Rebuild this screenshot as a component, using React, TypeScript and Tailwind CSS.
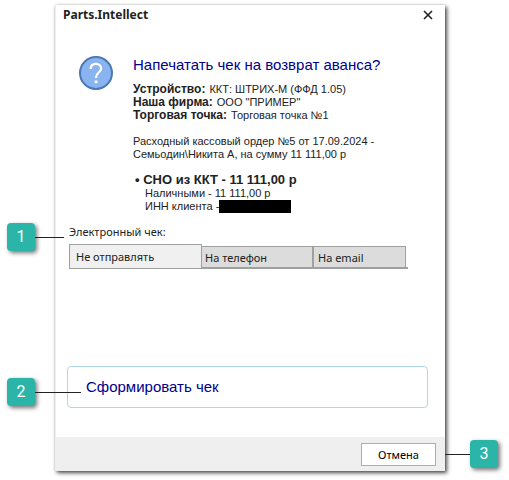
import type { ReactNode } from "react";

function Marker({ n, side = "left", line }: { n: number; side?: "left" | "right"; line: string }) {
  const badge = (
    <span className="flex size-7 shrink-0 items-center justify-center rounded-[4px] bg-[#2bb5a8] font-['Roboto',sans-serif] text-base text-white shadow-[2px_2px_4px_rgba(0,0,0,0.55)]">
      {n}
    </span>
  );
  const rule = <span className={`h-px bg-[#222222] ${line}`} />;
  return (
    <div className={`absolute top-1/2 flex -translate-y-1/2 items-center ${side === "left" ? "-left-[49px]" : "left-full"}`}>
      {side === "left" ? badge : rule}
      {side === "left" ? rule : badge}
    </div>
  );
}

function Field({ label, children }: { label: string; children: ReactNode }) {
  return (
    <p className="flex h-[13px] items-baseline gap-1">
      <b className="text-xs leading-[13px]">{label}</b>
      <span>{children}</span>
    </p>
  );
}

export default function App() {
  return (
    <main className="bg-white pt-[5px] pr-16 pb-2 pl-[55px] font-['Liberation_Sans',Arial,sans-serif] text-[11px] leading-[13px] text-[#222222]">
      <section
        role="dialog"
        aria-labelledby="title"
        className="relative border-l border-[#eeeeee] bg-white shadow-[2px_2px_4px_rgba(0,0,0,0.7),0_0_2px_rgba(0,0,0,0.2)]"
      >
        <header className="flex h-5 items-center justify-between pr-3 pl-[7px]">
          <h1 id="title" className="font-['Noto_Sans',sans-serif] text-xs font-bold">
            Parts.Intellect
          </h1>
          <button type="button" aria-label="Закрыть" className="flex size-[10px] items-center justify-center">
            <svg viewBox="0 0 10 10" className="size-[10px]" fill="none" stroke="#222222" strokeWidth="1.6">
              <path d="M1 1l8 8M9 1l-8 8" />
            </svg>
          </button>
        </header>

        <div className="flex gap-5 pt-[30px] pl-[23px]">
          <svg viewBox="0 0 34 34" className="mt-px size-[34px] shrink-0" fill="none">
            <circle cx="17" cy="17" r="16" fill="#8ab4f0" stroke="#4a78b5" strokeWidth="2" />
            <path
              d="M11.7 13c0-3.2 2.1-5.2 5.2-5.2s5.2 1.9 5.2 4.6c0 3.9-5 4.3-5 8.6v1"
              stroke="#fff"
              strokeWidth="2.2"
            />
            <circle cx="17.1" cy="25.8" r="1.6" fill="#fff" />
          </svg>
          <div>
            <h2 className="text-[15px] leading-5 text-[#00008b]">Напечатать чек на возврат аванса?</h2>
            <div className="mt-2">
              <Field label="Устройство:">ККТ: ШТРИХ-М (ФФД 1.05)</Field>
              <Field label="Наша фирма:">ООО "ПРИМЕР"</Field>
              <Field label="Торговая точка:">Торговая точка №1</Field>
            </div>
            <p className="mt-[13px]">
              Расходный кассовый ордер №5 от 17.09.2024 -
              <br />
              Семьодин\Никита А, на сумму 11 111,00 р
            </p>
            <div className="mt-3 pl-3">
              <p className="-indent-[10px] text-[13px] leading-[14px] font-bold">• СНО из ККТ - 11 111,00 р</p>
              <p>Наличными - 11 111,00 р</p>
              <p className="flex">
                ИНН клиента -<span className="h-[13px] w-[72px] bg-black" />
              </p>
            </div>
          </div>
        </div>

        <div className="pr-[17px] pl-[13px] font-['Noto_Sans',sans-serif]">
          <div className="relative mt-[11px]">
            <p className="flex h-5 items-center pb-1.5">Электронный чек:</p>
            <div className="absolute top-[13px] -left-[13px]">
              <Marker n={1} line="w-[29px]" />
            </div>
          </div>
          <div role="tablist" className="flex w-[339px] items-end">
            <button type="button" role="tab" aria-selected="true" className="h-[25px] w-[133px] border border-[#a0a0a0] bg-[#f0f0f0] pl-1.5 text-left">
              Не отправлять
            </button>
            <div className="flex h-[23px] flex-1 border-b-2 border-[#a0a0a0] pr-0.5">
              <button type="button" role="tab" aria-selected="false" className="w-[112px] border-t border-r-2 border-[#a0a0a0] bg-[#dcdcdc] pl-[3px] text-left">
                На телефон
              </button>
              <button type="button" role="tab" aria-selected="false" className="flex-1 border-t border-r border-[#a0a0a0] bg-[#dcdcdc] pl-1 text-left">
                На email
              </button>
            </div>
          </div>
        </div>

        <div className="relative mt-[97px] pr-[17px] pb-[29px] pl-[11px]">
          <button
            type="button"
            className="block h-[42px] w-full rounded-[4px] border border-[#add8e6] pl-[18px] text-left text-[15px] leading-5 text-[#00008b]"
          >
            Сформировать чек
          </button>
          <div className="absolute top-[26px] left-0">
            <Marker n={2} line="w-[46px]" />
          </div>
        </div>

        <footer className="relative flex h-[34px] items-center justify-end bg-[#efefef] pr-[9px]">
          <button type="button" className="h-[23px] w-[75px] border border-[#adadad] bg-white font-['Noto_Sans',sans-serif] text-black">
            Отмена
          </button>
          <Marker n={3} side="right" line="w-[25px]" />
        </footer>
      </section>
    </main>
  );
}
